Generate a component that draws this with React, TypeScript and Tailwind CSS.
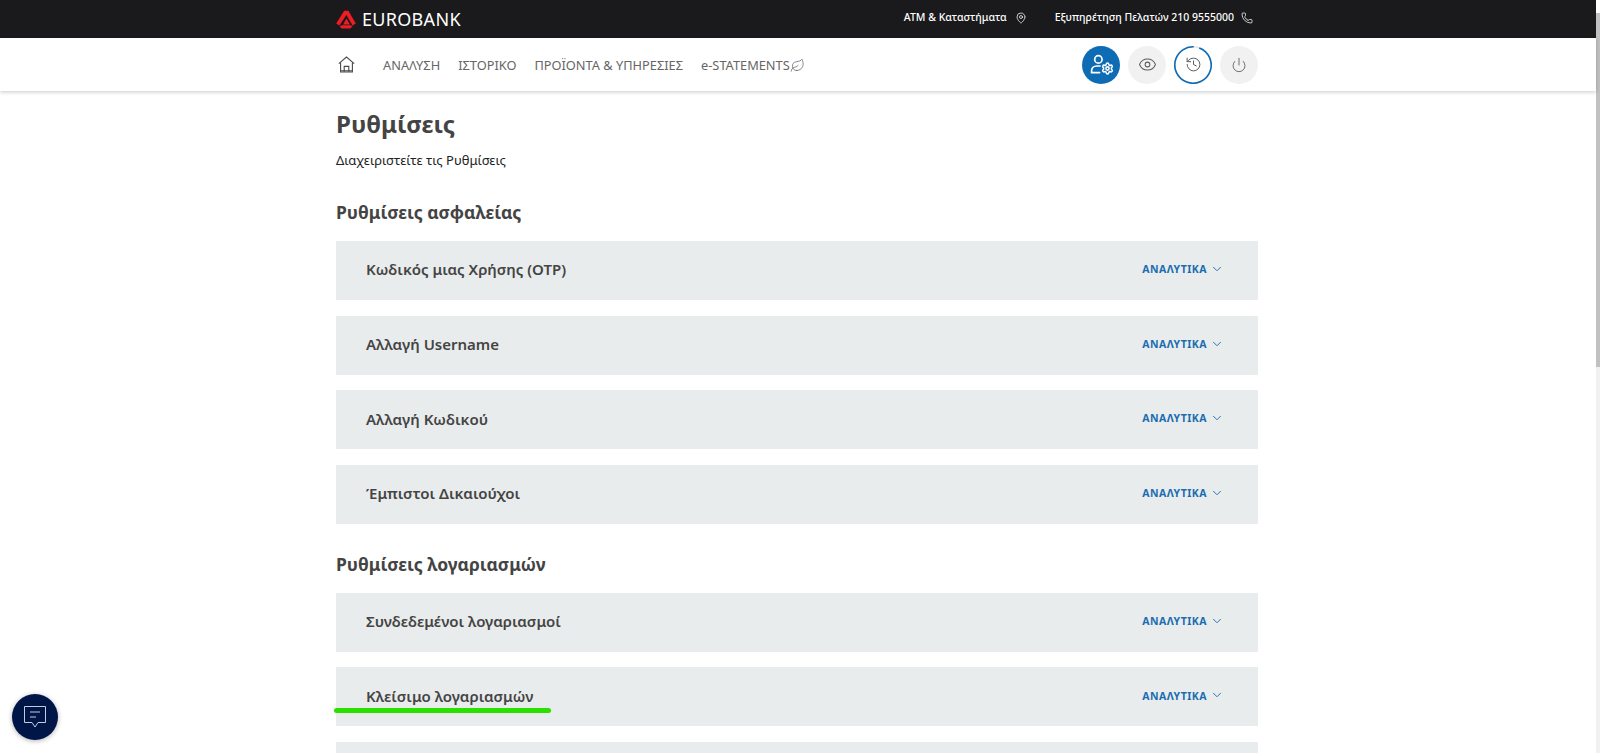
import { ChevronDown, Eye, History, Leaf, MapPin, Phone, Power, Settings } from "lucide-react";

const securityRows = [
  "Κωδικός μιας Χρήσης (OTP)",
  "Αλλαγή Username",
  "Αλλαγή Κωδικού",
  "Έμπιστοι Δικαιούχοι",
];

const accountRows = ["Συνδεδεμένοι λογαριασμοί", "Κλείσιμο λογαριασμών", ""];

const navLinks = ["ΑΝΑΛΥΣΗ", "ΙΣΤΟΡΙΚΟ", "ΠΡΟΪΟΝΤΑ & ΥΠΗΡΕΣΙΕΣ"];

const Logo = () => (
  <svg width="20" height="19" viewBox="0 0 20 19" fill="#ee1c25">
    <path d="M8.2 0.8 H12.4 L19.8 13.6 L16.6 15.4 L10.4 5 L3.4 15.6 L0.2 13.4 Z" />
    <path d="M10.4 8.4 L14 14.4 H7.2 Z" />
    <path d="M3.6 16 L6 15.2 H14.4 L16.6 16 L14.4 18.6 H5.6 Z" />
  </svg>
);

const HomeIcon = () => (
  <svg width="17" height="17" viewBox="0 0 17 17" fill="none" stroke="#4a4a4a" strokeWidth="1.1">
    <path d="M0.8 7.6 L8.5 1 L16.2 7.6" />
    <path d="M2.6 6.6 V16 H14.4 V6.6" />
    <path d="M6.2 16 V10.4 H10.8 V16" />
    <path d="M2.6 14.8 H14.4" />
  </svg>
);

const UserGearIcon = () => (
  <div className="relative h-[22px] w-[22px]">
    <svg width="22" height="22" viewBox="0 0 22 22" fill="none" stroke="white" strokeWidth="1.7" strokeLinecap="round">
      <circle cx="8.4" cy="5.4" r="3.7" />
      <path d="M9.6 18.6 H1.6 V16.8 C1.6 14 3.8 12 6.6 12 H10" />
    </svg>
    <Settings size={13} strokeWidth={2.8} color="white" className="absolute bottom-[1px] right-[-2px]" />
  </div>
);

const ChatIcon = () => (
  <svg width="22" height="23" viewBox="0 0 22 23" fill="none" stroke="#c3cbe0" strokeWidth="1">
    <path d="M0.5 0.5 H21.5 V16.5 H14 L11 21 L8 16.5 H0.5 Z" />
    <path d="M6 6 H16" />
    <path d="M6 11 H12" />
  </svg>
);

const Row = ({ title, underlined }: { title: string; underlined?: boolean }) => (
  <div className="relative flex h-[59px] shrink-0 items-center justify-between bg-[#e9ecec] pl-[30px] pr-[34px]">
    <span className="pb-[2px] text-[15px] font-semibold text-[#444444]">{title}</span>
    {title && (
      <span className="flex items-center gap-[3px] pb-[1px] text-[#1b6cb0]">
        <span className="text-[10.5px] font-bold tracking-[0.5px]">ΑΝΑΛΥΤΙΚΑ</span>
        <ChevronDown size={14} strokeWidth={1.6} className="-translate-y-px" />
      </span>
    )}
    {underlined && (
      <div className="absolute left-[-2px] top-[41px] h-[5px] w-[217px] rounded-full bg-[#2ae000]" />
    )}
  </div>
);

export default function App() {
  return (
    <div className="flex h-screen overflow-hidden bg-white font-['Noto_Sans',sans-serif]">
      <div className="min-w-0 flex-1">
        <header className="h-[38px] bg-[#1a1a1c]">
          <div className="ml-[336px] flex h-full w-[922px] items-center justify-between">
            <div className="flex items-center gap-[6px]">
              <Logo />
              <span className="text-[18px] font-normal tracking-[0.3px] text-white">EUROBANK</span>
            </div>
            <div className="flex items-center pb-[2px] text-[10.5px] font-medium text-white">
              <span>ATM &amp; Καταστήματα</span>
              <MapPin size={12} strokeWidth={1.5} className="ml-[8px]" />
              <span className="ml-[28px]">Εξυπηρέτηση Πελατών 210 9555000</span>
              <Phone size={12} strokeWidth={1.5} className="ml-[7px] mr-[5px]" />
            </div>
          </div>
        </header>

        <nav className="relative h-[53px] bg-white shadow-[0_1px_4px_rgba(0,0,0,0.22)]">
          <div className="ml-[336px] flex h-full w-[922px] items-center justify-between">
            <div className="flex items-center pl-[2px] text-[12.8px] text-[#666666]">
              <HomeIcon />
              <div className="ml-[28px] flex items-center gap-[18px] pt-[2px]">
                {navLinks.map((link) => (
                  <span key={link}>{link}</span>
                ))}
                <span className="flex items-center">
                  e-STATEMENTS
                  <Leaf size={15} strokeWidth={1.1} color="#555555" />
                </span>
              </div>
            </div>
            <div className="flex items-center gap-[8px]">
              <div className="flex h-[38px] w-[38px] items-center justify-center rounded-full bg-[#0e6cb5]">
                <UserGearIcon />
              </div>
              <div className="flex h-[38px] w-[38px] items-center justify-center rounded-full bg-[#f1f1f1] text-[#5c5c5c]">
                <Eye size={19} strokeWidth={1.3} />
              </div>
              <div className="relative flex h-[38px] w-[38px] items-center justify-center rounded-full text-[#5c5c5c]">
                <svg width="38" height="38" viewBox="0 0 38 38" fill="none" className="absolute inset-0">
                  <circle cx="19" cy="19" r="18.2" stroke="#e4e4e4" strokeWidth="1.6" />
                  <circle
                    cx="19"
                    cy="19"
                    r="18.2"
                    stroke="#0e6cb5"
                    strokeWidth="1.6"
                    strokeDasharray="108 114.4"
                    transform="rotate(-70 19 19)"
                  />
                </svg>
                <History size={17} strokeWidth={1.4} />
              </div>
              <div className="flex h-[38px] w-[38px] items-center justify-center rounded-full bg-[#f1f1f1] text-[#5c5c5c]">
                <Power size={16} strokeWidth={1.3} />
              </div>
            </div>
          </div>
        </nav>

        <main className="ml-[336px] w-[922px]">
          <h1 className="mt-[14px] text-[24px] font-bold leading-[38px] text-[#444444]">Ρυθμίσεις</h1>
          <p className="mt-[8px] text-[13px] leading-[18px] text-[#222222]">Διαχειριστείτε τις Ρυθμίσεις</p>
          <h2 className="mt-[31px] text-[17.5px] font-bold leading-[24px] text-[#444444]">Ρυθμίσεις ασφαλείας</h2>
          <div className="mt-[17px] flex flex-col gap-[15.67px]">
            {securityRows.map((title) => (
              <Row key={title} title={title} />
            ))}
          </div>
          <h2 className="mt-[28px] text-[17.5px] font-bold leading-[24px] text-[#444444]">Ρυθμίσεις λογαριασμών</h2>
          <div className="mt-[17px] flex flex-col gap-[15.5px]">
            {accountRows.map((title, i) => (
              <Row key={i} title={title} underlined={i === 1} />
            ))}
          </div>
        </main>
      </div>

      <div className="flex w-[4px] shrink-0 flex-col bg-[#f1f1f1]">
        <div className="h-[13px] bg-white" />
        <div className="h-[354px] bg-[#c1c1c1]" />
      </div>

      <button className="fixed bottom-[13px] left-[12px] flex h-[46px] w-[46px] items-center justify-center rounded-full bg-[#001647] shadow-[0_1px_5px_rgba(0,0,0,0.3)]">
        <ChatIcon />
      </button>
    </div>
  );
}
